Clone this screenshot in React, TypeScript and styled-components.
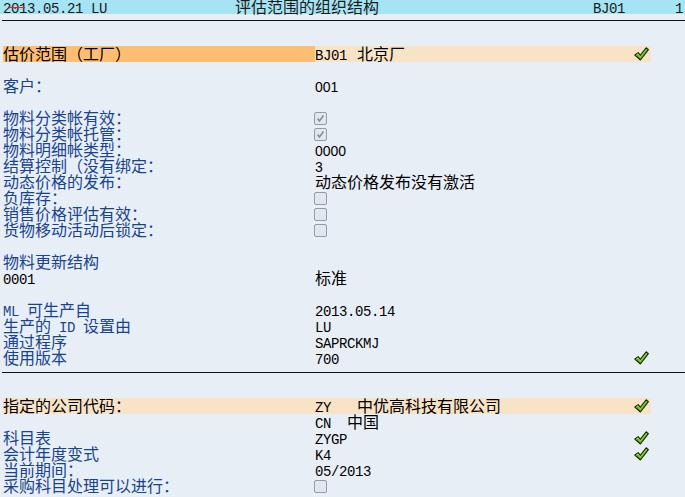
import React from 'react'
import styled, { createGlobalStyle } from 'styled-components'

const GlobalStyle = createGlobalStyle`
  html, body {
    margin: 0;
    padding: 0;
    background: #e8eef6;
  }
  body {
    font-family: 'Noto Sans CJK SC', 'Liberation Sans', sans-serif;
    font-size: 16px;
    color: #000;
  }
`

const Page = styled.div`
  width: 685px;
  height: 497px;
  overflow: hidden;
  background: #e8eef6;
`

const TitleBar = styled.div`
  display: flex;
  height: 14px;
  line-height: 13px;
  padding-left: 3px;
  background: #a6e4f3;
  color: #1a1a1a;
  white-space: nowrap;
`

const Stamp = styled.span`
  position: relative;
  width: 232px;

  /* cursor mark left over the date */
  &::before {
    content: '';
    position: absolute;
    left: 6px;
    top: 7px;
    width: 16px;
    height: 1px;
    background: #e8261c;
  }
`

const Title = styled.span`
  width: 358px;
`

const Plant = styled.span`
  width: 82px;
`

const PageNo = styled.span`
  width: 8px;
`

const Rule = styled.hr`
  margin: 6px 0 25px 2px;
  border: 0;
  height: 1px;
  background: #111;
`

const Section = styled.div`
  display: flex;
  flex-direction: column;
  padding-left: 3px;
`

type Tone = 'plain' | 'key' | 'soft'

const Row = styled.div<{ tone?: Tone }>`
  display: grid;
  grid-template-columns: 312px 336px;
  width: 648px;
  height: 16px;
  background: ${({ tone }) => (tone === 'soft' ? '#f8e3c6' : 'transparent')};
`

const Blank = styled.div`
  height: 16px;
`

const Label = styled.div<{ strong?: boolean; tone?: Tone }>`
  height: 16px;
  line-height: 14px;
  white-space: nowrap;
  color: ${({ strong }) => (strong ? '#000' : '#17438f')};
  background: ${({ tone }) => (tone === 'key' ? '#fdbe74' : 'transparent')};
`

const Value = styled.div<{ tone?: Tone }>`
  display: flex;
  align-items: center;
  height: 16px;
  white-space: nowrap;
  padding-right: 2px;
  background: ${({ tone }) => (tone === 'key' ? '#f8e3c6' : 'transparent')};
`

const Text = styled.span`
  display: block;
  height: 16px;
  line-height: 14px;
`

const Mono = styled.span<{ width?: number }>`
  display: inline-block;
  font-family: 'Liberation Mono', monospace;
  font-size: 14px;
  letter-spacing: -0.4px;
  width: ${({ width }) => (width ? `${width}px` : 'auto')};
  white-space: pre;
`

const Num = styled.span`
  font-family: 'Liberation Sans', sans-serif;
  font-size: 14px;
`

const Box = styled.span`
  display: inline-flex;
  align-items: center;
  justify-content: center;
  box-sizing: border-box;
  width: 13px;
  height: 13px;
  margin-left: -1px;
  border: 1px solid #939ca8;
  border-radius: 2px;
  background: #dfe7f1;
`

const TickIcon = styled.svg`
  margin-left: auto;
  flex: none;
`

const CheckBox = ({ checked }: { checked?: boolean }) => (
  <Box>
    {checked && (
      <svg width="11" height="11" viewBox="0 0 11 11">
        <polyline
          points="2.5,5.5 4.5,8 8.5,2.5"
          fill="none"
          stroke="#8c8c8c"
          strokeWidth="1.6"
        />
      </svg>
    )}
  </Box>
)

const Tick = () => (
  <TickIcon width="15" height="14" viewBox="0 0 15 14">
    <path
      d="M0.8 8 L4.2 5.6 L6.2 8.4 L12.2 0.8 L14.4 2.6 L6.4 13 Z"
      fill="#6cb423"
      stroke="#142c05"
      strokeWidth="1.1"
      strokeLinejoin="round"
    />
    <path d="M2.2 8 L4 6.9 L6.3 10 L12.4 2.4" fill="none" stroke="#a6e05a" strokeWidth="0.8" />
  </TickIcon>
)

const App = () => {
  return (
    <Page>
      <GlobalStyle />
      <TitleBar>
        <Stamp><Mono>2013.05.21 LU</Mono></Stamp>
        <Title>评估范围的组织结构</Title>
        <Plant><Mono>BJ01</Mono></Plant>
        <PageNo><Mono>1</Mono></PageNo>
      </TitleBar>
      <Rule />

      <Section>
        <Row>
          <Label strong tone="key">估价范围（工厂）</Label>
          <Value tone="key">
            <Text><Mono width={42}>BJ01</Mono>北京厂</Text>
            <Tick />
          </Value>
        </Row>
        <Blank />
        <Row>
          <Label>客户：</Label>
          <Value><Text><Num>001</Num></Text></Value>
        </Row>
        <Blank />
        <Row>
          <Label>物料分类帐有效：</Label>
          <Value><CheckBox checked /></Value>
        </Row>
        <Row>
          <Label>物料分类帐托管：</Label>
          <Value><CheckBox checked /></Value>
        </Row>
        <Row>
          <Label>物料明细帐类型：</Label>
          <Value><Text><Num>0000</Num></Text></Value>
        </Row>
        <Row>
          <Label>结算控制（没有绑定：</Label>
          <Value><Text><Num>3</Num></Text></Value>
        </Row>
        <Row>
          <Label>动态价格的发布：</Label>
          <Value><Text>动态价格发布没有激活</Text></Value>
        </Row>
        <Row>
          <Label>负库存：</Label>
          <Value><CheckBox /></Value>
        </Row>
        <Row>
          <Label>销售价格评估有效：</Label>
          <Value><CheckBox /></Value>
        </Row>
        <Row>
          <Label>货物移动活动后锁定：</Label>
          <Value><CheckBox /></Value>
        </Row>
        <Blank />
        <Row>
          <Label>物料更新结构</Label>
          <Value />
        </Row>
        <Row>
          <Label strong><Mono>0001</Mono></Label>
          <Value><Text>标准</Text></Value>
        </Row>
        <Blank />
        <Row>
          <Label><Mono>ML </Mono>可生产自</Label>
          <Value><Text><Mono>2013.05.14</Mono></Text></Value>
        </Row>
        <Row>
          <Label>生产的<Mono> ID </Mono>设置由</Label>
          <Value><Text><Mono>LU</Mono></Text></Value>
        </Row>
        <Row>
          <Label>通过程序</Label>
          <Value><Text><Mono>SAPRCKMJ</Mono></Text></Value>
        </Row>
        <Row>
          <Label>使用版本</Label>
          <Value>
            <Text><Mono>700</Mono></Text>
            <Tick />
          </Value>
        </Row>
      </Section>

      <Rule />

      <Section>
        <Row tone="soft">
          <Label strong>指定的公司代码：</Label>
          <Value>
            <Text><Mono width={42}>ZY</Mono>中优高科技有限公司</Text>
            <Tick />
          </Value>
        </Row>
        <Row>
          <Label />
          <Value><Text><Mono width={32}>CN</Mono>中国</Text></Value>
        </Row>
        <Row>
          <Label>科目表</Label>
          <Value>
            <Text><Mono>ZYGP</Mono></Text>
            <Tick />
          </Value>
        </Row>
        <Row>
          <Label>会计年度变式</Label>
          <Value>
            <Text><Mono>K4</Mono></Text>
            <Tick />
          </Value>
        </Row>
        <Row>
          <Label>当前期间：</Label>
          <Value><Text><Mono>05/2013</Mono></Text></Value>
        </Row>
        <Row>
          <Label>采购科目处理可以进行：</Label>
          <Value><CheckBox /></Value>
        </Row>
      </Section>
    </Page>
  )
}

export default App
